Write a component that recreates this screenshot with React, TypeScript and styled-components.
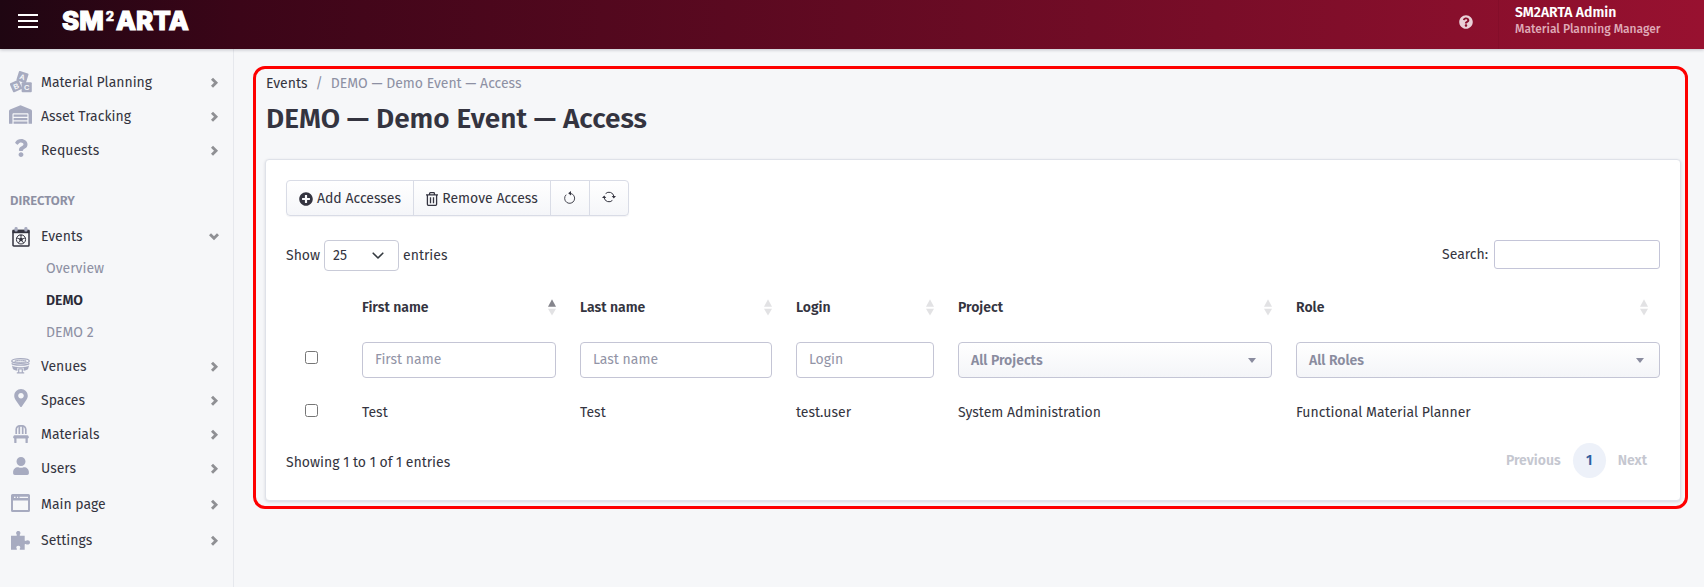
import React from 'react';
import styled, { createGlobalStyle, css } from 'styled-components';
import {
  FaQuestion,
  FaQuestionCircle,
  FaMapMarkerAlt,
  FaChair,
  FaUser,
  FaWarehouse,
  FaPlusCircle,
} from 'react-icons/fa';

const GlobalStyle = createGlobalStyle`
  *, *::before, *::after { box-sizing: border-box; }
  body {
    margin: 0;
    background: #f6f7f9;
    color: #343440;
    font-family: 'Fira Sans', 'Noto Sans', sans-serif;
    font-size: 14px;
    line-height: 20px;
    overflow: hidden;
  }
  input, button { font: inherit; color: inherit; }
`;

const Page = styled.div`
  height: 587px;
  display: flex;
  flex-direction: column;
`;

/* ---------- header ---------- */

const Header = styled.header`
  flex: none;
  height: 49px;
  display: flex;
  color: #fff;
  background: linear-gradient(91deg, #1f0612 0%, #3b0518 14%, #981130 100%);
  box-shadow: 0 1px 3px rgba(40, 40, 60, 0.25);
  z-index: 1;
`;

const MenuButton = styled.button`
  width: 20px;
  height: 14px;
  margin: 14px 24px 0 18px;
  padding: 0;
  border: 0;
  background: none;
  display: flex;
  flex-direction: column;
  justify-content: space-between;
`;

const MenuBar = styled.span`
  height: 2px;
  background: #fff;
`;

const Logo = styled.div`
  display: flex;
  margin-top: 6px;
  font-family: Inter, sans-serif;
  font-weight: 800;
  font-size: 26px;
  line-height: 30px;
  letter-spacing: 0.1px;
  -webkit-text-stroke: 1.2px #fff;
  paint-order: stroke;
  stroke-linejoin: round;
`;

const LogoSquare = styled.span`
  width: 12px;
  font-size: 13px;
  line-height: 20px;
  text-align: center;
  -webkit-text-stroke: 0.5px #fff;
`;

const Spacer = styled.div`
  flex: 1;
`;

const HelpButton = styled.div`
  width: 80px;
  padding: 15px 0 0 40px;
  font-size: 14px;
  line-height: 0;
  color: #ead0d7;
  border-right: 1px solid rgba(40, 0, 20, 0.07);
`;

const UserBox = styled.div`
  width: 205px;
  padding: 3px 0 0 16px;
`;

const UserName = styled.div`
  font-weight: 600;
  line-height: 19px;
`;

const UserRole = styled.div`
  font-size: 12px;
  font-weight: 500;
  line-height: 14px;
  color: #dfa9b6;
`;

/* ---------- sidebar ---------- */

const Body = styled.div`
  flex: 1;
  display: flex;
`;

const Sidebar = styled.nav`
  flex: none;
  width: 234px;
  padding-top: 16px;
  border-right: 1px solid #e6e8ed;
`;

const NavRow = styled.a<{ $h?: number }>`
  height: ${(p) => p.$h ?? 34}px;
  padding-right: 14px;
  display: flex;
  align-items: center;
`;

const NavIcon = styled.span<{ $drop?: number }>`
  flex: none;
  width: 41px;
  padding-top: ${(p) => Math.max(p.$drop ?? 0, 0)}px;
  padding-bottom: ${(p) => Math.max(-(p.$drop ?? 0), 0)}px;
  display: flex;
  justify-content: center;
  font-size: 18px;
  color: #a7abc0;
`;

const NavText = styled.span`
  flex: 1;
  padding-top: 2px;
`;

const NavHeading = styled.div`
  padding: 24px 0 8px 10px;
  font-size: 13px;
  font-weight: 600;
  color: #8d90a3;
`;

const SubRow = styled.a<{ $active?: boolean }>`
  height: 32px;
  padding-left: 46px;
  display: flex;
  align-items: center;
  color: #8d90a3;
  ${(p) =>
    p.$active &&
    css`
      color: #2b2b38;
      font-weight: 600;
    `}
`;

/* ---------- content ---------- */

const Frame = styled.main`
  width: 1435px;
  height: 443px;
  margin: 17px 0 0 19px;
  padding: 5px 4px 0 9px;
  border: 3px solid #fe0000;
  border-radius: 12px;
`;

const Breadcrumb = styled.div`
  display: flex;
  padding: 0 1px;
`;

const Crumb = styled.span<{ $muted?: boolean }>`
  color: ${(p) => (p.$muted ? '#8d90a3' : 'inherit')};
`;

const CrumbSlash = styled.span`
  margin: 0 8px;
  color: #8d90a3;
`;

const Title = styled.h1`
  margin: 7px 0 22px 1px;
  font-size: 28px;
  line-height: 36px;
  font-weight: 600;
`;

const Card = styled.section`
  height: 342px;
  padding: 20px;
  background: #fff;
  border: 1px solid #dfe2e9;
  border-radius: 4px;
  box-shadow: 0 1px 3px rgba(40, 40, 70, 0.15);
`;

const Toolbar = styled.div`
  width: 343px;
  height: 36px;
  display: flex;
  border: 1px solid #d9dce6;
  border-radius: 4px;
  background: linear-gradient(#fff, #f5f6f9);
  box-shadow: 0 1px 1px rgba(40, 40, 70, 0.05);
`;

const ToolButton = styled.button<{ $w: number; $raised?: boolean }>`
  width: ${(p) => p.$w}px;
  padding: ${(p) => (p.$raised ? '0 0 2px' : '1px 0 0')};
  display: flex;
  align-items: center;
  justify-content: center;
  gap: 4px;
  border: 0;
  background: none;
  & + & { border-left: 1px solid #d9dce6; }
`;

const Controls = styled.div`
  height: 31px;
  margin-top: 24px;
  display: flex;
  align-items: flex-start;
  justify-content: space-between;
`;

const LengthControl = styled.label`
  display: flex;
  align-items: center;
  gap: 4px;
  line-height: 31px;
`;

const SelectBox = styled.span`
  width: 75px;
  height: 31px;
  padding: 0 14px 0 8px;
  display: flex;
  align-items: center;
  justify-content: space-between;
  border: 1px solid #c9cbd8;
  border-radius: 4px;
`;

const SearchControl = styled.label`
  display: flex;
  gap: 6px;
  line-height: 30px;
`;

const SearchInput = styled.input`
  width: 166px;
  height: 29px;
  border: 1px solid #c4c5d8;
  border-radius: 3px;
  background: #fff;
`;

const TableRow = styled.div<{ $h: number; $top?: number }>`
  height: ${(p) => p.$h}px;
  padding-top: ${(p) => p.$top ?? 0}px;
  display: grid;
  grid-template-columns: 76px 218px 216px 162px 338px 1fr;
  align-items: center;
`;

const HeadCell = styled.div<{ $last?: boolean }>`
  padding-right: ${(p) => (p.$last ? 12 : 24)}px;
  display: flex;
  align-items: center;
  justify-content: space-between;
  font-weight: 600;
`;

const Check = styled.input<{ $lift: number }>`
  display: block;
  width: 13px;
  height: 13px;
  margin: 0 0 ${(p) => p.$lift}px 19px;
`;

const FilterInput = styled.input`
  height: 36px;
  min-width: 0;
  margin-right: 24px;
  padding: 0 12px 1px;
  border: 1px solid #c4c5d5;
  border-radius: 4px;
  background: #fff;
  &::placeholder { color: #9294a6; opacity: 1; }
`;

const FilterSelect = styled.div<{ $last?: boolean }>`
  height: 36px;
  margin-right: ${(p) => (p.$last ? 0 : 24)}px;
  padding: 1px 15px 0 12px;
  display: flex;
  align-items: center;
  justify-content: space-between;
  border: 1px solid #c4c5d5;
  border-radius: 4px;
  background: linear-gradient(#fff, #f4f5f8);
  color: #8a8c9f;
  font-weight: 600;
`;

const Footer = styled.div`
  display: flex;
  justify-content: space-between;
`;

const Summary = styled.div`
  padding-top: 10px;
`;

const Pager = styled.div`
  display: flex;
  align-items: center;
  margin-right: 13px;
  height: 35px;
  font-weight: 600;
  color: #c5c7d0;
`;

const PageNumber = styled.span`
  width: 33px;
  height: 35px;
  margin: 0 12px;
  border-radius: 50%;
  background: #edf1f9;
  color: #2f5f9e;
  line-height: 35px;
  text-align: center;
`;

/* ---------- drawings ---------- */

const Chevron = ({ down = false }: { down?: boolean }) => (
  <svg width="10" height="12" viewBox="0 0 10 12" fill="none" stroke="#8f9094" strokeWidth="2.9">
    <path d={down ? 'M1 4.2 5 8.2 9 4.2' : 'M3 2.800 7 6.800 3 10.800'} />
  </svg>
);

const BlocksIcon = () => (
  <svg width="22" height="22" viewBox="0 0 22 22" fontFamily="Liberation Sans" fontWeight="700" fontSize="7.5" textAnchor="middle">
    <g transform="rotate(17 12.5 6)">
      <rect x="7.5" y="1" width="10" height="10" rx="1" fill="#a7abc0" />
      <text x="12.5" y="8.7" fill="#f6f7f9">A</text>
    </g>
    <g transform="rotate(-24 6 15)">
      <rect x="1" y="10.2" width="9.8" height="9.8" rx="1" fill="#a7abc0" />
      <text x="6" y="17.8" fill="#f6f7f9">B</text>
    </g>
    <rect x="11.6" y="11.2" width="10.2" height="10" rx="1" fill="#a7abc0" />
    <text x="16.7" y="18.9" fill="#f6f7f9">C</text>
  </svg>
);

const EventIcon = () => (
  <svg width="18" height="20" viewBox="0 0 18 20">
    <rect x="1" y="3.5" width="16" height="15.5" rx="0.8" fill="none" stroke="#343440" strokeWidth="1.5" />
    <rect x="0.5" y="2.8" width="17" height="3.4" fill="#343440" />
    <rect x="2.6" y="0" width="3" height="4.6" rx="1.2" fill="#a7abc0" />
    <rect x="12.4" y="0" width="3" height="4.6" rx="1.2" fill="#a7abc0" />
    <circle cx="9" cy="12.4" r="4.6" fill="none" stroke="#343440" strokeWidth="1" />
    <path d="M9 10.2l2.1 1.5-.8 2.5H7.7l-.8-2.5z" fill="#343440" />
    <path d="M9 10.4V8.5M11 11.8l2.2-1M10.2 14l1.4 2M7.8 14l-1.4 2M7 11.8l-2.2-1" stroke="#343440" strokeWidth="0.9" />
    <path d="M7.3 8.2h3.4L9 9.3z" fill="#343440" />
  </svg>
);

const StadiumIcon = () => (
  <svg width="19" height="16" viewBox="0 0 19 16" fill="none" stroke="#a7abc0">
    <ellipse cx="9.5" cy="3" rx="8.8" ry="2.3" strokeWidth="1.3" />
    <ellipse cx="9.5" cy="3.3" rx="5.8" ry="1" strokeWidth="1" />
    <path d="M.7 5.4c1.5 2.3 16.1 2.3 17.600 0" strokeWidth="1.3" />
    <path d="M1 7.400c2 2.200 15 2.200 17 0l-.8 3.400c-.4 1-2.700 1.800-4.600 2V9.700H6.400v3.100c-1.900-.2-4.200-1-4.600-2z" fill="#a7abc0" stroke="none" />
    <path d="M7.400 10.800h4.200M7.700 10.600v4M11.300 10.600v4M5.800 14.900h7.400" strokeWidth="1.2" />
  </svg>
);

const WindowIcon = () => (
  <svg width="19" height="18" viewBox="0 0 19 18">
    <rect x="1" y="1" width="17" height="16" rx="0.5" fill="none" stroke="#a7abc0" strokeWidth="2" />
    <path d="M1 1h17v5.500H1z" fill="#a7abc0" />
    <path d="M3 2.800h1.500v1.200H3zM6 2.800h1.200v1.200H6zM8.500 2.800H17v1.200H8.500z" fill="#f6f7f9" />
  </svg>
);

const PuzzleIcon = () => (
  <svg width="19" height="19" viewBox="0 0 19 19" fill="#a7abc0">
    <path d="M0 4.700h5.400c.5 0 .7-.4.400-.9C4.400 2 5.400 0 7.300 0s2.900 2 1.500 3.800c-.3.500-.1.900.4.900h4.500v4.600c0 .5.500.8 1 .5 1.900-1.300 4.300-.4 4.300 1.600s-2.400 2.900-4.300 1.600c-.5-.3-1 0-1 .5V18.700H9.200c-.6 0-.8-.4-.4-.9 1-1.300.4-3-1.500-3s-2.500 1.700-1.500 3c.4.500.2.900-.4.900H0z" />
  </svg>
);

const TrashIcon = () => (
  <svg width="12" height="14" viewBox="0 0 12 14" fill="none" stroke="#343440" strokeWidth="1.3">
    <path d="M0 2.900h12M3.600 2.800V1.500q0-.8.8-.8h3.200q.8 0 .8.800v1.300M1.400 3v9.300q0 1 1 1h7.200q1 0 1-1V3M4.500 5.200v6M7.500 5.200v6" />
  </svg>
);

const UndoIcon = () => (
  <svg width="12" height="13" viewBox="0 0 12 13" fill="none" stroke="#343440" strokeWidth="0.9">
    <path d="M2.200 3.700A5 5 0 1 0 6.500 2.400" />
    <path d="M7 0v4.600L4.200 2.300z" fill="#343440" stroke="none" />
  </svg>
);

const RefreshIcon = () => (
  <svg width="14" height="12" viewBox="0 0 14 12" fill="none" stroke="#343440" strokeWidth="1">
    <path d="M3.600 2.600A4.900 4.900 0 0 1 11.800 5M2.200 7a4.900 4.900 0 0 0 8.200 2.400" />
    <path d="M9.700 5h4.300l-2.200 2.600zM0 7h4.300L2.200 4.400z" fill="#343440" stroke="none" />
  </svg>
);

const SelectArrow = () => (
  <svg width="12" height="8" viewBox="0 0 12 8" fill="none" stroke="#343a40" strokeWidth="1.6" strokeLinecap="round" strokeLinejoin="round">
    <path d="M1.200 1.200 6 6l4.800-4.800" />
  </svg>
);

const Caret = () => (
  <svg width="8" height="5" viewBox="0 0 8 5" fill="#8a8c9f">
    <path d="M0 0h8L4 5z" />
  </svg>
);

const SortIcon = ({ asc = false }: { asc?: boolean }) => (
  <svg width="8" height="17" viewBox="0 0 8 17">
    <path d="M0 7.800h8L4 .3z" fill={asc ? '#85858c' : '#e2e2e4'} />
    <path d="M0 9.700h8L4 16.600z" fill="#e2e2e4" />
  </svg>
);

/* ---------- data ---------- */

type NavEntry = { label: string; icon: React.ReactNode; drop?: number; h?: number; open?: boolean };

const mainNav: NavEntry[] = [
  { label: 'Material Planning', icon: <BlocksIcon /> },
  { label: 'Asset Tracking', icon: <FaWarehouse size={23} />, drop: -3 },
  { label: 'Requests', icon: <FaQuestion />, drop: -4 },
];

const directoryNav: NavEntry[] = [
  { label: 'Venues', icon: <StadiumIcon /> },
  { label: 'Spaces', icon: <FaMapMarkerAlt />, drop: -4 },
  { label: 'Materials', icon: <FaChair /> },
  { label: 'Users', icon: <FaUser />, drop: -4 },
  { label: 'Main page', icon: <WindowIcon />, drop: -2, h: 37 },
  { label: 'Settings', icon: <PuzzleIcon />, h: 36 },
];

const columns = [
  { label: 'First name', asc: true },
  { label: 'Last name' },
  { label: 'Login' },
  { label: 'Project' },
  { label: 'Role' },
];

const NavItem = ({ label, icon, drop, h, open }: NavEntry) => (
  <NavRow $h={h}>
    <NavIcon $drop={drop}>{icon}</NavIcon>
    <NavText>{label}</NavText>
    <Chevron down={open} />
  </NavRow>
);

export default function App() {
  return (
    <Page>
      <GlobalStyle />
      <Header>
        <MenuButton aria-label="Menu">
          <MenuBar />
          <MenuBar />
          <MenuBar />
        </MenuButton>
        <Logo>
          SM<LogoSquare>2</LogoSquare>ARTA
        </Logo>
        <Spacer />
        <HelpButton>
          <FaQuestionCircle />
        </HelpButton>
        <UserBox>
          <UserName>SM2ARTA Admin</UserName>
          <UserRole>Material Planning Manager</UserRole>
        </UserBox>
      </Header>
      <Body>
        <Sidebar>
          {mainNav.map((n) => (
            <NavItem key={n.label} {...n} />
          ))}
          <NavHeading>DIRECTORY</NavHeading>
          <NavItem label="Events" icon={<EventIcon />} drop={2} open />
          <SubRow>Overview</SubRow>
          <SubRow $active>DEMO</SubRow>
          <SubRow>DEMO 2</SubRow>
          {directoryNav.map((n) => (
            <NavItem key={n.label} {...n} />
          ))}
        </Sidebar>
        <Frame>
          <Breadcrumb>
            <Crumb>Events</Crumb>
            <CrumbSlash>/</CrumbSlash>
            <Crumb $muted>DEMO — Demo Event — Access</Crumb>
          </Breadcrumb>
          <Title>DEMO — Demo Event — Access</Title>
          <Card>
            <Toolbar>
              <ToolButton $w={126}>
                <FaPlusCircle size={14} />
                Add Accesses
              </ToolButton>
              <ToolButton $w={137}>
                <TrashIcon />
                Remove Access
              </ToolButton>
              <ToolButton $w={39} $raised aria-label="Undo">
                <UndoIcon />
              </ToolButton>
              <ToolButton $w={39} $raised aria-label="Refresh">
                <RefreshIcon />
              </ToolButton>
            </Toolbar>
            <Controls>
              <LengthControl>
                Show
                <SelectBox>
                  25
                  <SelectArrow />
                </SelectBox>
                entries
              </LengthControl>
              <SearchControl>
                Search:
                <SearchInput />
              </SearchControl>
            </Controls>
            <TableRow $h={71} $top={2}>
              <span />
              {columns.map((c) => (
                <HeadCell key={c.label} $last={c.label === 'Role'}>
                  {c.label}
                  <SortIcon asc={c.asc} />
                </HeadCell>
              ))}
            </TableRow>
            <TableRow $h={36}>
              <Check type="checkbox" $lift={5} />
              <FilterInput placeholder="First name" />
              <FilterInput placeholder="Last name" />
              <FilterInput placeholder="Login" />
              <FilterSelect>
                All Projects
                <Caret />
              </FilterSelect>
              <FilterSelect $last>
                All Roles
                <Caret />
              </FilterSelect>
            </TableRow>
            <TableRow $h={65} $top={4}>
              <Check type="checkbox" $lift={4} />
              <span>Test</span>
              <span>Test</span>
              <span>test.user</span>
              <span>System Administration</span>
              <span>Functional Material Planner</span>
            </TableRow>
            <Footer>
              <Summary>Showing 1 to 1 of 1 entries</Summary>
              <Pager>
                Previous
                <PageNumber>1</PageNumber>
                Next
              </Pager>
            </Footer>
          </Card>
        </Frame>
      </Body>
    </Page>
  );
}
